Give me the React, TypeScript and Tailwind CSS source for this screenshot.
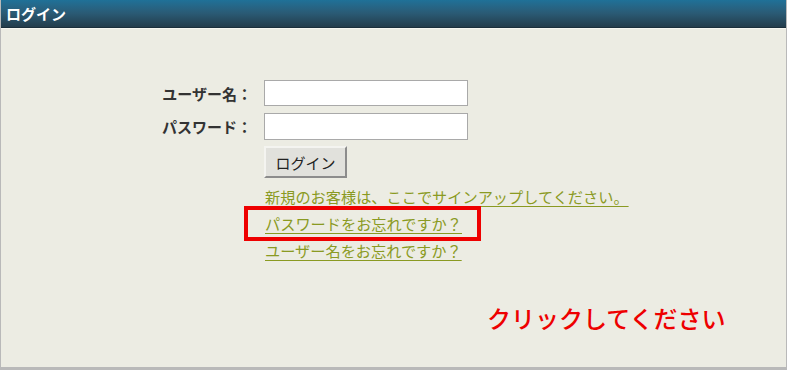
import React from "react";

const jp = '"Meiryo", "Noto Sans CJK JP", "Noto Sans", sans-serif';

export default function App() {
  return (
    <div className="w-[787px] h-[370px] bg-[#b9b9b9] overflow-hidden" style={{ fontFamily: jp }}>
      <div className="relative w-[785px] h-[367px] ml-[1px] bg-[#ecece3] flex flex-col">
        <div className="h-[28px] bg-gradient-to-b from-[#1f7198] via-[#2a5a74] to-[#233d4c] border-b border-[#1b2f3b] flex items-center pl-[5px]">
          <span className="text-white font-bold text-[15px] leading-none">ログイン</span>
        </div>
        <div className="h-[1px] bg-[#f6f6f0]" />
        <div className="pt-[51px] pl-[149px] flex flex-col">
          <div className="flex items-center gap-[12px] h-[26px]">
            <span className="w-[102px] text-right font-bold text-[15px] text-[#333] leading-none">ユーザー名：</span>
            <div className="w-[204px] h-[26px] bg-white border border-[#a9a9a9]" />
          </div>
          <div className="flex items-center gap-[12px] h-[27px] mt-[7px]">
            <span className="w-[102px] text-right font-bold text-[15px] text-[#333] leading-none">パスワード：</span>
            <div className="w-[204px] h-[27px] bg-white border border-[#a9a9a9]" />
          </div>
          <div className="pl-[114px] mt-[6px]">
            <button className="w-[83px] h-[32px] bg-[#e1e1dc] border-2 border-t-[#f4f4f0] border-l-[#f4f4f0] border-r-[#8c8c8c] border-b-[#8c8c8c] text-[15px] text-[#222] leading-none flex items-center justify-center">
              ログイン
            </button>
          </div>
          <div className="pl-[115px] mt-[5px] flex flex-col items-start text-[15.2px] leading-[27px] text-[#8a9a22]">
            <a className="underline underline-offset-[3px]">新規のお客様は、ここでサインアップしてください。</a>
            <a className="underline underline-offset-[3px]">パスワードをお忘れですか？</a>
            <a className="underline underline-offset-[3px]">ユーザー名をお忘れですか？</a>
          </div>
        </div>
        <div className="absolute left-[243px] top-[206px] w-[237px] h-[35px] border-[4px] border-[#ee0000]" />
        <div className="absolute left-[486px] top-[300px] text-[24px] leading-[36px] font-medium text-[#ee0000]">クリックしてください</div>
      </div>
    </div>
  );
}
